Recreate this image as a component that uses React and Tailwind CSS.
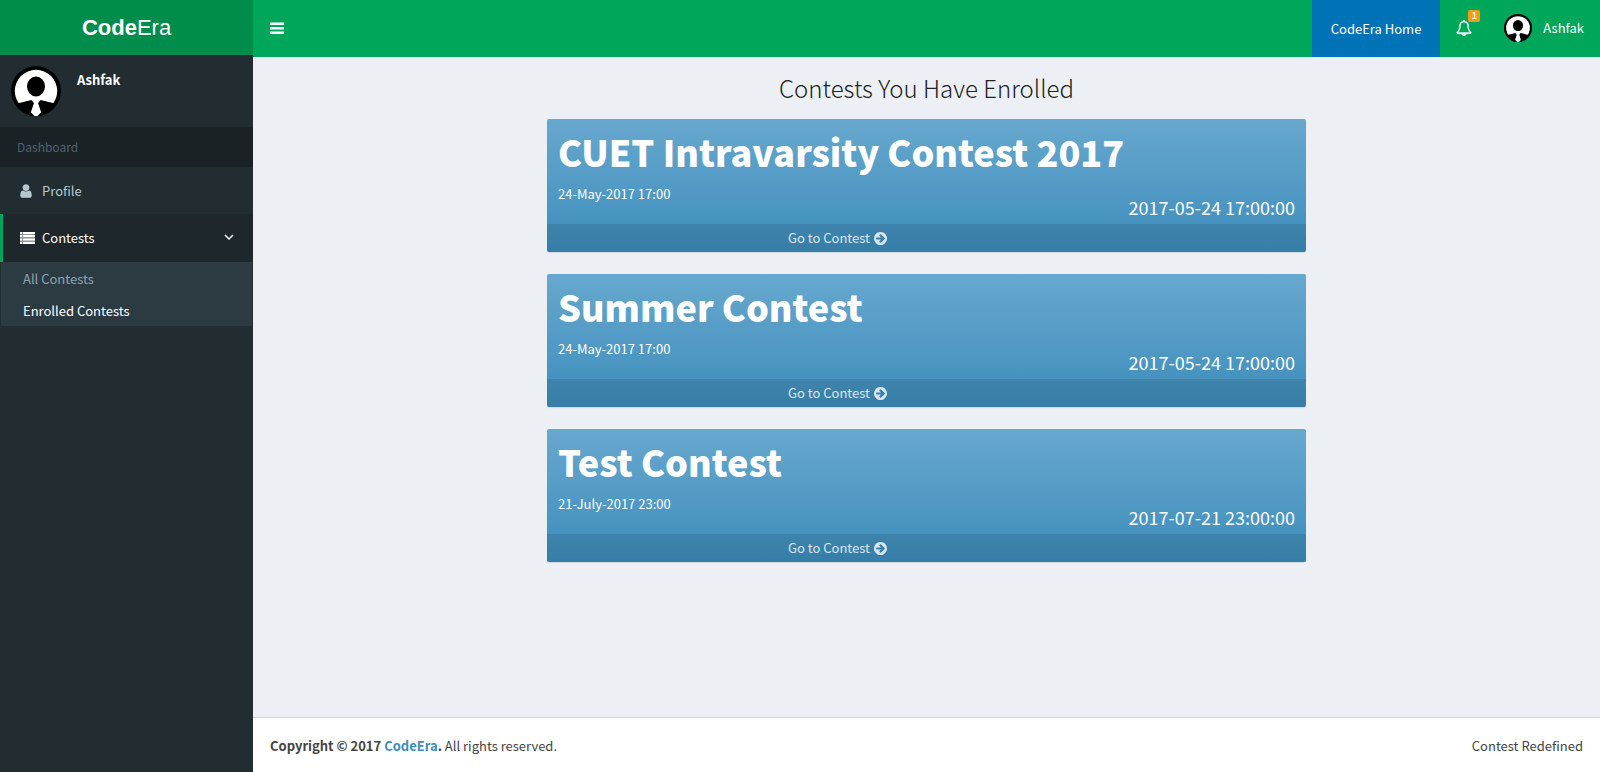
const contests = [
  { name: 'CUET Intravarsity Contest 2017', date: '24-May-2017 17:00', start: '2017-05-24 17:00:00' },
  { name: 'Summer Contest', date: '24-May-2017 17:00', start: '2017-05-24 17:00:00' },
  { name: 'Test Contest', date: '21-July-2017 23:00', start: '2017-07-21 23:00:00' },
];

function Avatar({ className }) {
  return (
    <svg viewBox="0 0 50 50" className={className} aria-hidden="true">
      <circle cx="25" cy="25" r="25" fill="#000" />
      <circle cx="25" cy="25" r="21.2" fill="#fff" />
      <ellipse cx="25" cy="20.500" rx="9" ry="10" fill="#000" />
      <path d="M6 37.500L20.500 34l2.500 3-3 9L23 50C15 49.500 9.500 45.500 6 37.500zM44 37.500L29.500 34l-2.500 3 3 9L27 50c8-.5 13.500-4.500 17-12.500z" fill="#000" />
      <path d="M22 34.500h6l-1.200 3.500 3.200 8.500L26.500 50h-3L20 46.500l3.200-8.500z" fill="#fff" />
    </svg>
  );
}

function UserIcon() {
  return (
    <svg viewBox="0 0 1792 1792" className="size-4 shrink-0" fill="currentColor" aria-hidden="true">
      <path d="M1536 1399q0 109-62.500 187t-150.500 78h-854q-88 0-150.500-78t-62.500-187q0-85 8.500-160.500t31.500-152 58.500-131 94-89 134.500-34.500q131 128 313 128t313-128q76 0 134.500 34.500t94 89 58.500 131 31.500 152 8.500 160.500zm-256-887q0 159-112.500 271.500t-271.500 112.500-271.500-112.500-112.500-271.500 112.500-271.500 271.500-112.500 271.500 112.500 112.500 271.500z" />
    </svg>
  );
}

function ListIcon() {
  return (
    <svg viewBox="0 0 15 12" className="h-3 w-[15px] shrink-0" fill="currentColor" aria-hidden="true">
      <path d="M0 0h15v12H0z" opacity=".5" />
      <path d="M0 0h2v2H0zM3 0h12v2H3zM0 3h2v2H0zM3 3h12v2H3zM0 6.500h2v2H0zM3 6.500h12v2H3zM0 10h2v2H0zM3 10h12v2H3z" />
    </svg>
  );
}

function ArrowIcon() {
  return (
    <svg viewBox="0 0 1536 1536" className="size-[13px] shrink-0" fill="currentColor" aria-hidden="true">
      <path transform="translate(-128 -128)" d="M1413 896q0-27-18-45l-91-91-362-362q-18-18-45-18t-45 18l-91 91q-18 18-18 45t18 45l189 189h-502q-26 0-45 19t-19 45v128q0 26 19 45t45 19h502l-189 189q-18 18-18 45t18 45l91 91q18 18 45 18t45-18l362-362 91-91q18-18 18-45zm251 0q0 209-103 385.500t-279.500 279.500-385.500 103-385.500-103-279.500-279.500-103-385.500 103-385.500 279.500-279.500 385.500-103 385.500 103 279.500 279.500 103 385.500z" />
    </svg>
  );
}

function BellIcon() {
  return (
    <svg viewBox="0 0 1792 1792" className="size-4" fill="currentColor" stroke="currentColor" strokeWidth="40" aria-hidden="true">
      <path d="M912 1696q0-16-16-16-59 0-101.500-42.500t-42.500-101.500q0-16-16-16t-16 16q0 73 51.500 124.500t124.500 51.500q16 0 16-16zm-666-288h1300q-266-300-266-832 0-51-24-105t-69-103-121.500-80.500-169.500-31.500-169.500 31.500-121.500 80.500-69 103-24 105q0 532-266 832zm1482 0q0 52-38 90t-90 38h-448q0 106-75 181t-181 75-181-75-75-181h-448q-52 0-90-38t-38-90q50-42 91-88t85-119.500 74.500-158.500 50-206 19.500-260q0-152 117-282.500t307-158.500q-8-19-8-39 0-40 28-68t68-28 68 28 28 68q0 20-8 39 190 28 307 158.500t117 282.500q0 139 19.500 260t50 206 74.500 158.500 85 119.500 91 88z" />
    </svg>
  );
}

function Sidebar() {
  return (
    <aside className="flex w-[253px] shrink-0 flex-col bg-[#222d32]">
      <a
        href="#"
        className="flex h-[55px] items-center justify-center bg-[#008d4c] font-['Liberation_Sans',sans-serif] text-[22px] text-white"
      >
        <span><b>Code</b>Era</span>
      </a>
      <div className="flex h-[72px] items-start gap-4 p-[11px]">
        <Avatar className="size-[50px] shrink-0" />
        <p className="pt-1 leading-5 font-bold text-white">Ashfak</p>
      </div>
      <nav>
        <h2 className="flex h-10 items-center bg-[#1a2226] px-[17px] text-xs text-[#4b646f]">Dashboard</h2>
        <a href="#" className="flex h-[47px] items-center gap-2 pl-[18px] text-[#b8c7ce]">
          <UserIcon />
          Profile
        </a>
        <button
          type="button"
          className="flex h-12 w-full items-center gap-[7px] border-l-3 border-[#00a65a] bg-[#1e282c] pr-[19px] pl-[17px] text-white"
        >
          <ListIcon />
          Contests
          <svg viewBox="0 0 10 10" className="ml-auto size-2.5" fill="none" stroke="currentColor" strokeWidth="1.5" aria-hidden="true">
            <path d="M1 2l4 4 4-4" />
          </svg>
        </button>
        <ul className="mx-px h-16 bg-[#2c3b41] pt-px pl-[22px]">
          <li><a href="#" className="flex h-8 items-center text-[#8aa4af]">All Contests</a></li>
          <li><a href="#" className="flex h-8 items-center text-white">Enrolled Contests</a></li>
        </ul>
      </nav>
    </aside>
  );
}

function TopBar() {
  return (
    <header className="flex h-[57px] items-stretch bg-[#00a65a] text-white">
      <button type="button" aria-label="Toggle navigation" className="px-[17px] pb-0.5">
        <svg viewBox="0 0 14 12" className="h-3 w-3.5" fill="currentColor" aria-hidden="true">
          <path d="M0 .5h14v2.500H0zM0 5h14v2.500H0zM0 9.500h14V12H0z" />
        </svg>
      </button>
      <a href="#" className="ml-auto flex items-center bg-[#0073b7] px-[19px]">CodeEra Home</a>
      <button type="button" aria-label="Notifications" className="relative px-4 pb-0.5">
        <BellIcon />
        <span className="absolute top-2.5 right-2 flex h-3 w-3 items-center justify-center rounded-xs bg-[#f39c12] text-[9px] font-bold">1</span>
      </button>
      <button type="button" className="flex items-center gap-[11px] px-4 pb-0.5">
        <Avatar className="size-7" />
        Ashfak
      </button>
    </header>
  );
}

function ContestCard({ contest }) {
  return (
    <article className="overflow-hidden rounded-xs bg-linear-to-t from-[#3c8dbc] to-[#67a8ce] text-white shadow-[0_1px_1px_rgba(0,0,0,0.1)]">
      <div className="h-[105px] px-[11px] pt-[9px]">
        <h2 className="text-[36px] leading-[46px] font-black">{contest.name}</h2>
        <p className="pt-2 leading-6">{contest.date}</p>
        <p className="-mt-2 text-right text-lg leading-[18px]">{contest.start}</p>
      </div>
      <a href="#" className="flex h-7 items-center gap-1 bg-black/10 pl-[241px] text-white/80">
        Go to Contest
        <ArrowIcon />
      </a>
    </article>
  );
}

export default function App() {
  return (
    <div className="flex min-h-screen bg-[#222d32] font-['Noto_Sans_CJK_SC',sans-serif] text-[13px]">
      <Sidebar />
      <div className="flex min-w-0 flex-1 flex-col bg-[#ecf0f5]">
        <TopBar />
        <main className="flex-1 px-4 pt-4">
          <h1 className="h-[46px] text-center text-2xl leading-[30px] font-light text-[#222]">Contests You Have Enrolled</h1>
          <div className="mx-auto flex max-w-[759px] flex-col gap-[22px]">
            {contests.map((contest) => (
              <ContestCard key={contest.name} contest={contest} />
            ))}
          </div>
        </main>
        <footer className="flex h-[55px] items-center justify-between border-t border-[#d2d6de] bg-white px-[17px] pt-0.5 text-[#444]">
          <p>
            <strong>Copyright © 2017 <a href="#" className="text-[#3c8dbc]">CodeEra</a>.</strong> All rights reserved.
          </p>
          <p>Contest Redefined</p>
        </footer>
      </div>
    </div>
  );
}
